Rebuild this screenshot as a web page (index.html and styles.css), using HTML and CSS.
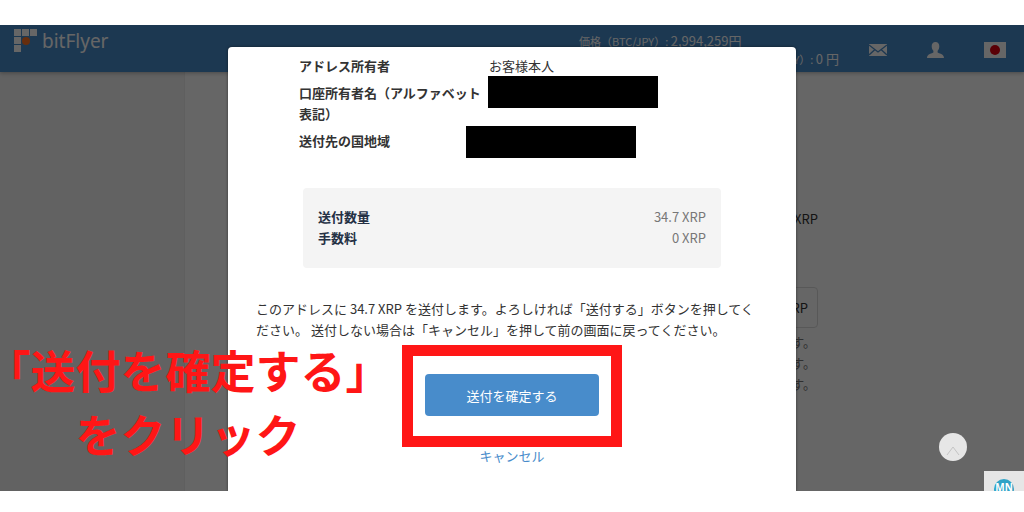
FILE: index.html
```html
<!DOCTYPE html>
<html lang="ja">
<head>
	<meta charset="utf-8">
	<meta name="viewport" content="width=device-width, initial-scale=1">
	<title>bitFlyer</title>
	<link rel="stylesheet" href="styles.css">
</head>
<body>
<div class="screen">

	<header class="header">
		<a class="logo" href="#">
			<svg width="24" height="24" viewBox="0 0 24 24">
				<g fill="#fff">
					<rect x="0" y="0" width="7" height="7"/>
					<rect x="8" y="0" width="7" height="7"/>
					<rect x="16" y="0" width="7" height="7"/>
					<rect x="0" y="8" width="7" height="7"/>
					<rect x="0" y="16" width="7" height="7"/>
				</g>
				<circle cx="12" cy="12" r="4" fill="#ff7424"/>
			</svg>
			<span>bitFlyer</span>
		</a>
		<div class="rates">
			<div>価格（BTC/JPY）: <span class="rate">2,994,259円</span></div>
			<div class="rate-total">（JPY）: <span class="rate">0 円</span></div>
		</div>
		<nav class="icons">
			<a href="#" aria-label="メッセージ">
				<svg width="18" height="12" viewBox="0 0 18 12">
					<rect width="18" height="12" fill="#fff"/>
					<path d="M0 1l9 7 9-7M0 11l6-5.500M18 11l-6-5.500" fill="none" stroke="#488ccb" stroke-width="1.300"/>
				</svg>
			</a>
			<a href="#" aria-label="アカウント">
				<svg width="17" height="16" viewBox="0 0 17 16">
					<path d="M8.500 0C6 0 4.700 1.800 4.700 4.200c0 2.200.8 3.600 1.700 4.600v1.700C5.500 11.600 0 11.500 0 16h17c0-4.500-5.500-4.400-6.400-5.500V8.800c.9-1 1.700-2.400 1.700-4.600C12.300 1.800 11 0 8.500 0z" fill="#fff"/>
				</svg>
			</a>
			<a href="#" aria-label="日本語">
				<svg width="22" height="16" viewBox="0 0 22 16">
					<rect width="22" height="16" fill="#fff"/>
					<circle cx="11" cy="8" r="5" fill="#e00010"/>
				</svg>
			</a>
		</nav>
	</header>

	<div class="page">
		<aside class="sidebar"></aside>
		<main class="content">
			<div class="balance">XRP</div>
			<div class="amount">XRP</div>
			<ul class="notes">
				<li>ます。</li>
				<li>ます。</li>
				<li>ます。</li>
			</ul>
		</main>
	</div>

	<!-- 送付確認モーダル -->
	<div class="backdrop">
		<div class="modal" role="dialog">
			<dl class="details">
				<dt>アドレス所有者</dt>
				<dd>お客様本人</dd>
				<dt>口座所有者名（アルファベット表記）</dt>
				<dd><span class="mask mask-name"></span></dd>
				<dt>送付先の国地域</dt>
				<dd><span class="mask mask-country"></span></dd>
			</dl>
			<dl class="summary">
				<dt>送付数量</dt>
				<dd>34.7 XRP</dd>
				<dt>手数料</dt>
				<dd>0 XRP</dd>
			</dl>
			<p class="message">このアドレスに 34.7 XRP を送付します。よろしければ「送付する」ボタンを押してください。 送付しない場合は「キャンセル」を押して前の画面に戻ってください。</p>
			<div class="actions">
				<div class="confirm">
					<button type="button" class="btn">送付を確定する</button>
				</div>
				<a class="cancel" href="#">キャンセル</a>
			</div>
		</div>
	</div>

	<button type="button" class="to-top" aria-label="トップへ">
		<svg width="14" height="10" viewBox="0 0 14 10"><path d="M1 9l6-8 6 8" fill="none" stroke="#c4c4c4"/></svg>
	</button>
	<div class="badge">
		<svg width="20" height="20" viewBox="0 0 20 20">
			<circle cx="10" cy="10" r="10" fill="#2fa3c7"/>
			<text x="10" y="12" text-anchor="middle" class="badge-text">MN</text>
		</svg>
	</div>

	<div class="caption">「送付を確定する」<br>をクリック</div>
</div>
</body>
</html>
```
FILE: styles.css
```css
* {
	box-sizing: border-box;
}

body {
	margin: 0;
	padding: 25px 0 21px;
	height: 100vh;
	background: #fff;
	color: #333;
	font: 13px/21px "Noto Sans CJK JP", sans-serif;
}

a {
	color: #488ccb;
	text-decoration: none;
}

dl, dd, p, ul {
	margin: 0;
	padding: 0;
}

.screen {
	position: relative;
	display: flex;
	flex-direction: column;
	height: 100%;
	overflow: hidden;
}

/* header */
.header {
	display: flex;
	flex: none;
	align-items: flex-start;
	height: 47px;
	padding: 0 18px 0 14px;
	background: #488ccb;
	box-shadow: 0 1px 4px rgba(0, 0, 0, .3);
	color: #fff;
	z-index: 1;
}

.logo {
	display: flex;
	gap: 4px;
	margin-right: auto;
	padding-top: 4px;
	color: #fff;
	font: 19px/24px "Noto Sans", sans-serif;
}

.rates {
	width: 260px;
	padding-top: 7px;
	font-size: 11px;
	line-height: 18px;
}

.rate {
	font-size: 13px;
}

.rate-total {
	text-align: right;
}

.icons {
	display: flex;
	align-items: center;
	gap: 40px;
	margin-left: 30px;
	padding-top: 17px;
}

.icons svg {
	display: block;
}

/* page behind the modal */
.page {
	display: flex;
	flex: 1;
	background: #fff;
}

.sidebar {
	width: 185px;
	background: #f4f4f4;
	border-right: 1px solid #eee;
}

.content {
	flex: 1;
	padding: 136px 206px 0 0;
	text-align: right;
}

.amount {
	margin: 58px 0 3px 400px;
	padding: 9px;
	border: 1px solid #ddd;
	border-radius: 4px;
}

.notes {
	padding-right: 2px;
	color: #777;
	list-style: none;
}

/* modal */
.backdrop {
	position: absolute;
	top: 0;
	right: 0;
	bottom: 0;
	left: 0;
	z-index: 2;
	display: flex;
	justify-content: center;
	padding-top: 22px;
	background: rgba(0, 0, 0, .6);
}

.modal {
	width: 568px;
	padding: 8px 30px 0 28px;
	background: #fff;
	border-radius: 4px 4px 0 0;
	box-shadow: 0 0 3px rgba(0, 0, 0, .5);
}

.details {
	display: grid;
	grid-template-columns: 190px 1fr;
	row-gap: 6px;
	margin: 0 43px;
}

.details dt,
.summary dt {
	font-weight: bold;
}

.details dd {
	position: relative;
}

.mask {
	position: absolute;
	width: 170px;
	height: 32px;
	background: #000;
}

.mask-name {
	top: -6px;
	left: -1px;
}

.mask-country {
	top: -4px;
	left: -23px;
}

.summary {
	display: grid;
	grid-template-columns: 1fr 1fr;
	margin: 37px 45px 30px 47px;
	padding: 18px 15px 20px;
	background: #f4f4f4;
	border-radius: 4px;
}

.summary dt {
	color: #243044;
}

.summary dd {
	color: #777;
	text-align: right;
}

.actions {
	display: flex;
	flex-direction: column;
	align-items: center;
	margin: 5px -2px 0 0;
}

.confirm {
	padding: 18px 12px 20px;
	border: 11px solid #ff1616;
}

.btn {
	display: block;
	width: 174px;
	height: 42px;
	padding: 0;
	border: 0;
	border-radius: 4px;
	background: #488ccb;
	color: #fff;
	font: inherit;
}

.cancel {
	line-height: 17px;
}

/* things on top */
.to-top {
	position: absolute;
	right: 57px;
	bottom: 30px;
	z-index: 3;
	width: 28px;
	height: 28px;
	padding: 8px 0 0;
	border: 0;
	border-radius: 50%;
	background: #e6e6e6;
	line-height: 0;
}

.badge {
	position: absolute;
	right: 0;
	bottom: 0;
	z-index: 3;
	width: 40px;
	height: 20px;
	padding-top: 8px;
	overflow: hidden;
	background: #e6e6e6;
	line-height: 0;
	text-align: center;
}

.badge-text {
	fill: #fff;
	font: bold 10px "Noto Sans", sans-serif;
}

.caption {
	position: absolute;
	top: 313px;
	left: 8px;
	z-index: 3;
	color: #ff1616;
	font-size: 45px;
	font-weight: bold;
	font-feature-settings: "halt"; /* half-width brackets */
	line-height: 64px;
	text-align: center;
	white-space: nowrap;
}
```
